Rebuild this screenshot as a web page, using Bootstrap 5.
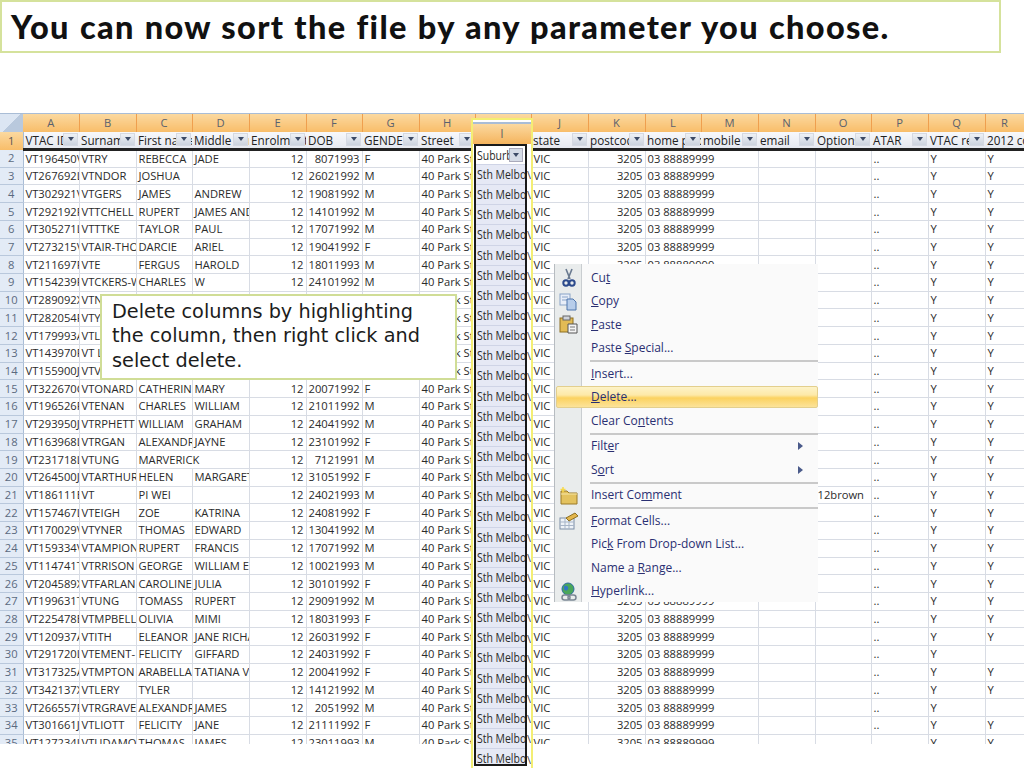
<!DOCTYPE html>
<html lang="en"><head><meta charset="utf-8"><title>Sort</title>
<link href="https://cdn.jsdelivr.net/npm/bootstrap@5.3.0/dist/css/bootstrap.min.css" rel="stylesheet">
<style>
html,body{margin:0;background:#fff;overflow:hidden}
.slide{width:1024px;height:768px;position:relative;overflow:hidden;background:#fff}
.title-box{width:1001px;height:53px;border:2px solid #d5e29c;padding:0 0 0 9px;font:900 32.5px/49px Lato,sans-serif;letter-spacing:1.33px;word-spacing:1px;color:#111;white-space:nowrap}
.sheet-wrap{margin-top:60px;height:631px;overflow:hidden;border-top:1px solid #a9bdd6}
.xl{table-layout:fixed;border-collapse:collapse;width:1024px;font:11.2px/14px "Open Sans",sans-serif;color:#2b2b2b;margin:0}
.xl td,.xl th{padding:0 2px;white-space:nowrap;overflow:hidden;border:1px solid #d8dce4;height:17.72px;font-weight:400}
.xl .ch{height:17.5px;background:linear-gradient(#fbd9a0,#f8bd69);border:0;border-right:1px solid #ef9f4e;text-align:center;color:#59616e;padding:0}
.xl .rh{background:#e3ebf6;color:#5b6a80;text-align:center;padding:0;border:0;border-bottom:1px solid #b9c8dc;border-right:1px solid #a9bdd6}
.xl .rh.sel{background:linear-gradient(#fbd9a0,#f8bd69);border-bottom:0;color:#555;height:18px}
.xl .corner{background:linear-gradient(135deg,#dce6f3 50%,#b9c9dd 50%);border:0}
.xl .hd{background:linear-gradient(#f7f8fb,#e6e9f0);border:0;border-bottom:3px solid #222;position:relative;padding:0 0 0 2px;color:#222;font-size:11.7px;height:18px}
.xl .num{text-align:right}
.fbtn{position:absolute;right:1px;top:1px;width:15px;height:13px;background:linear-gradient(#eef1f6,#ccd3de);border:1px solid #d5d9e2;display:flex;align-items:center;justify-content:center}
.fbtn::after,.fbtn-i::after{content:"";border:3px solid transparent;border-top:4px solid #3c4a66;border-bottom:0}
.zoomcol{position:absolute;left:471px;top:118px;width:62px;height:650px;border-left:2px solid #f3ee74;border-right:2px solid #f3ee74;border-top:2px solid #f3ee74;background:#fff;color:#2b2b2b;overflow:hidden}
.zc-h{height:22px;margin-top:2px;background:linear-gradient(#fbd9a0,#f5b45d);text-align:center;font:12px/20px "Open Sans",sans-serif;color:#666;border-top:2px solid #a9bdd6}
.zc-main{display:flex;align-items:flex-start}
.zc-b{margin-left:1px;width:53px;flex:none;border:2px solid #1a1a1a;background:#e6e9f5;height:622px;overflow:hidden;font:12.6px/20.15px "Open Sans",sans-serif}
.zc-r{height:20.15px;overflow:hidden;white-space:nowrap;border-bottom:1px solid #cfd4e6}
.zc-r span.txt{display:inline-block;transform:scaleX(.83);transform-origin:left center;margin-left:1px}
.zc-r.first{background:#fff;position:relative;height:19px;line-height:19px}
.fbtn-i{position:absolute;right:2px;top:2px;width:14px;height:14px;background:#d5dbe6;border:1px solid #aab;display:flex;align-items:center;justify-content:center}
.zc-gut{font:11px/20.15px "Open Sans",sans-serif;padding-top:21px;width:4px;overflow:hidden;color:#444}
.callout{position:absolute;left:100px;top:294px;width:357px;height:86px;background:#fff;border:2px solid #d0dd96;padding:4px 30px 0 10px;font:19.3px/24.3px "DejaVu Sans",sans-serif;color:#1c1c1c}
.xmenu{position:absolute;left:554px;top:264px;width:264px;height:338px;background:#fafafa;font:12px/1 "Open Sans",sans-serif;color:#2a2f72}
.xmenu-rail{position:absolute;left:0;top:0;bottom:0;width:28px;background:#e9ecec;border-right:1px solid #c9cdd0;border-left:1px solid #b7bcc0}
.xm-list{position:relative;padding-top:2px}
.xm-item{height:23.5px;display:flex;align-items:center;justify-content:space-between;padding:0 15px 0 37px;position:relative}
.xm-ico{position:absolute;left:5px;top:2px;width:20px;height:20px}
.xm-sep{height:2px;margin:0 0 0 36px;background:#c9c9c9}
.xm-item.act{margin:0 0 1.5px 2px;padding-left:34px;height:22px;background:linear-gradient(#fdf3c8 0,#fde9a8 40%,#fbd260 55%,#fce39a 100%);border:1px solid #e3cf8d;border-radius:2px}
.xm-arrow{width:0;height:0;border:4px solid transparent;border-left:5px solid #4a5a8a;border-right:0}
</style></head><body>
<div class="slide">
<div class="title-box">You can now sort the file by any parameter you choose.</div>
<div class="sheet-wrap"><table class="xl" id="xl"></table></div>

<div class="zoomcol"><div class="zc-h">I</div><div class="zc-main"><div class="zc-b" id="zc"></div><div class="zc-gut" id="gut"></div></div></div>

<div class="callout">Delete columns by highlighting the column, then right click and select delete.</div>

<div class="xmenu"><div class="xmenu-rail"></div><div class="xm-list">
<div class="xm-item"><svg class="xm-ico" viewBox="0 0 20 20"><path d="M7 1l4 10M13 1L9 11" stroke="#6a7a90" stroke-width="1.6" fill="none"/><circle cx="7" cy="15" r="2.7" fill="none" stroke="#2c4a8c" stroke-width="2"/><circle cx="13" cy="15" r="2.7" fill="none" stroke="#2c4a8c" stroke-width="2"/></svg><span>Cu<u>t</u></span></div>
<div class="xm-item"><svg class="xm-ico" viewBox="0 0 20 20"><rect x="1" y="2" width="10" height="11" fill="#e8eef8" stroke="#8aa4c8"/><path d="M3 5h6M3 8h6" stroke="#8aa4c8"/><path d="M8 7h6l3 3v8H8z" fill="#b7cdea" stroke="#4f76ad"/></svg><span><u>C</u>opy</span></div>
<div class="xm-item"><svg class="xm-ico" viewBox="0 0 20 20"><rect x="1" y="3" width="13" height="14" fill="#e2bb55" stroke="#8d6f20"/><rect x="4" y="1" width="7" height="4" fill="#cfd3da" stroke="#666"/><path d="M9 9h9v9H9z" fill="#f4f4f4" stroke="#555"/><path d="M11 12h5M11 15h5" stroke="#777"/></svg><span><u>P</u>aste</span></div>
<div class="xm-item"><span>Paste <u>S</u>pecial...</span></div>
<div class="xm-sep"></div>
<div class="xm-item"><span><u>I</u>nsert...</span></div>
<div class="xm-item act"><span><u>D</u>elete...</span></div>
<div class="xm-item"><span>Clear Co<u>n</u>tents</span></div>
<div class="xm-sep"></div>
<div class="xm-item"><span>Filt<u>e</u>r</span><i class="xm-arrow"></i></div>
<div class="xm-item"><span>S<u>o</u>rt</span><i class="xm-arrow"></i></div>
<div class="xm-sep"></div>
<div class="xm-item"><svg class="xm-ico" viewBox="0 0 20 20"><path d="M2 5h6l2 2h8v11H2z" fill="#e3c25f" stroke="#9a7b28"/><path d="M2 8h16" stroke="#f6e6a8"/><path d="M4 1v5M1.500 3.500h5" stroke="#f7d94a" stroke-width="1.500"/></svg><span>Insert Co<u>m</u>ment</span></div>
<div class="xm-sep"></div>
<div class="xm-item"><svg class="xm-ico" viewBox="0 0 20 20"><rect x="1" y="7" width="14" height="11" fill="#eef2f7" stroke="#7d8ea6"/><path d="M1 11h14M1 14.500h14M6 7v11M10 7v11" stroke="#a7b5c8"/><path d="M7 7l9-5 3 3-9 5z" fill="#e3b64c" stroke="#8d6f20"/></svg><span><u>F</u>ormat Cells...</span></div>
<div class="xm-item"><span>Pic<u>k</u> From Drop-down List...</span></div>
<div class="xm-item"><span>Name a <u>R</u>ange...</span></div>
<div class="xm-item"><svg class="xm-ico" viewBox="0 0 20 20"><circle cx="9" cy="7" r="6" fill="#4aa65a" stroke="#2c6ca0"/><path d="M5 4c3-1 5 1 4 3s-3 2-4 0" fill="#2f76c4"/><rect x="3" y="13" width="8" height="5" rx="2.500" fill="none" stroke="#7b8794" stroke-width="1.500"/><rect x="9" y="13" width="8" height="5" rx="2.500" fill="none" stroke="#7b8794" stroke-width="1.500"/></svg><span><u>H</u>yperlink...</span></div>
</div></div>
</div>
<script>
const W=[23,56,57,56,57,57,56,57,56,56,57,57,56,57,57,56,57,57,39];
const L="ABCDEFGHIJKLMNOPQR".split("");
const H=["VTAC ID","Surname","First name","Middle name","Enrolment","DOB","GENDER","Street","","state","postcode","home phone","mobile","email","Options","ATAR","VTAC ref","2012 course"];
const R=`VT196450V|VTRY|REBECCA|JADE|8071993|F
VT267692L|VTNDOR|JOSHUA||26021992|M
VT302921V|VTGERS|JAMES|ANDREW|19081992|M
VT292192F|VTTCHELL|RUPERT|JAMES ANDREW|14101992|M
VT305271L|VTTTKE|TAYLOR|PAUL|17071992|M
VT273215V|VTAIR-THOMAS|DARCIE|ARIEL|19041992|F
VT211697F|VTE|FERGUS|HAROLD|18011993|M
VT154239F|VTCKERS-WEST|CHARLES|W|24101992|M
VT289092X|VTN||||
VT282054F|VTY||||
VT179993A|VTL||||
VT143970F|VT L||||
VT155900J|VTV||||
VT322670C|VTONARD|CATHERINE|MARY|20071992|F
VT196526F|VTENAN|CHARLES|WILLIAM|21011992|M
VT293950J|VTRPHETT|WILLIAM|GRAHAM|24041992|M
VT163968L|VTRGAN|ALEXANDRA|JAYNE|23101992|F
VT231718L|VTUNG|MARVERICK||7121991|M
VT264500J|VTARTHUR|HELEN|MARGARET|31051992|F
VT186111E|VT|PI WEI||24021993|M
VT157467L|VTEIGH|ZOE|KATRINA|24081992|F
VT170029V|VTYNER|THOMAS|EDWARD|13041992|M
VT159334V|VTAMPION|RUPERT|FRANCIS|17071992|M
VT114741T|VTRRISON|GEORGE|WILLIAM EDWARD|10021993|M
VT204589X|VTFARLAN|CAROLINE|JULIA|30101992|F
VT199631T|VTUNG|TOMASS|RUPERT|29091992|M
VT225478E|VTMPBELL|OLIVIA|MIMI|18031993|F
VT120937A|VTITH|ELEANOR|JANE RICHARD|26031992|F
VT291720L|VTEMENT-|FELICITY|GIFFARD|24031992|F
VT317325A|VTMPTON|ARABELLA|TATIANA VERA|20041992|F
VT342137X|VTLERY|TYLER||14121992|M
VT266557F|VTRGRAVES|ALEXANDRA|JAMES|2051992|M
VT301661J|VTLIOTT|FELICITY|JANE|21111992|F
VT127234I|VTUDAMORE|THOMAS|JAMES|23011993|M`.split("\n").map(s=>s.split("|"));
const t=document.getElementById("xl");
let h="<colgroup>"+W.map(w=>`<col style="width:${w}px">`).join("")+"</colgroup>";
h+=`<tr><th class="corner ch"></th>`+L.map(c=>`<th class="ch">${c}</th>`).join("")+"</tr>";
h+=`<tr><th class="rh sel">1</th>`+H.map((c,i)=>`<td class="hd">${c}${(i==8||i==17)?"":'<span class="fbtn"></span>'}</td>`).join("")+"</tr>";
R.forEach((r,i)=>{const n=i+2;
 const q=(n==30||n==33)?"":"Y";
 const covered=n>=10&&n<=14;
 const underMenu=n>=9&&n<=26;
 let c=`<td>${r[0]}</td><td>${r[1]}</td>`;
 c+= n==19?`<td colspan="2">${r[2]}</td>`:`<td>${r[2]}</td><td>${r[3]}</td>`;
 c+=`<td class="num">${covered?"":"12"}</td><td class="num">${r[4]}</td><td>${r[5]}</td><td>40 Park St</td><td></td><td>VIC</td><td class="num">${underMenu?"":"3205"}</td>`;
 c+=underMenu?`<td></td><td></td><td></td>`:`<td colspan="2">03 88889999</td><td></td>`;
 c+=`<td>${n==21?"12brown":""}</td><td>..</td><td>Y</td><td>${q}</td>`;
 h+=`<tr><th class="rh">${n}</th>${c}</tr>`;
});
t.innerHTML=h;
let z=`<div class="zc-r first"><span class="txt">Suburb</span><span class="fbtn-i"></span></div>`;
let g="";
for(let i=0;i<31;i++){z+=`<div class="zc-r"><span class="txt">Sth Melbourne</span></div>`;g+="\\<br>";}
document.getElementById("zc").innerHTML=z;
document.getElementById("gut").innerHTML=g;
</script>
<script src="https://cdn.jsdelivr.net/npm/bootstrap@5.3.0/dist/js/bootstrap.bundle.min.js"></script>
</body></html>
